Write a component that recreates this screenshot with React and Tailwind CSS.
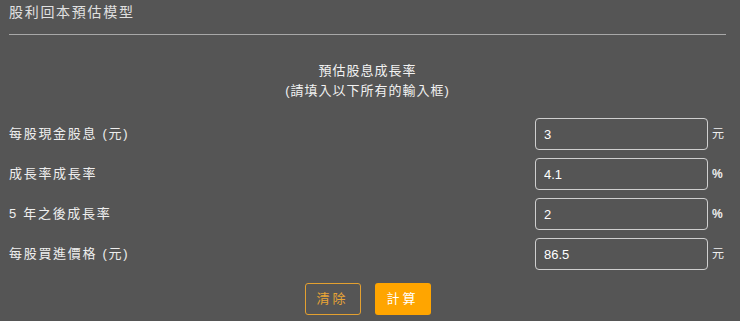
const rows = [
  { label: '每股現金股息 (元)', value: '3', unit: '元' },
  { label: '成長率成長率', value: '4.1', unit: '%' },
  { label: '5 年之後成長率', value: '2', unit: '%' },
  { label: '每股買進價格 (元)', value: '86.5', unit: '元' },
]

export default function App() {
  return (
    <div
      className="min-h-screen w-[740px] h-[321px] overflow-hidden bg-[#555555] pl-[9px] pr-[14px] text-[#e8e8e8]"
      style={{ fontFamily: '"Liberation Sans", "Noto Sans CJK TC", sans-serif' }}
    >
      <div className="pt-[3px] h-[34px] text-[14px] leading-[18px] tracking-[1.7px] text-[#e0e0e0]">股利回本預估模型</div>
      <div className="h-px bg-[#a8a8a8]" />

      <div className="pt-[26px] text-center text-[13px] leading-[20px] tracking-[1px] text-[#f2f2f2]">
        <div>預估股息成長率</div>
        <div>(請填入以下所有的輸入框)</div>
      </div>

      <div className="mt-[13px] flex flex-col">
        {rows.map((r) => (
          <div key={r.label} className="flex h-[40px] items-center">
            <div className="flex-1 text-[13px] tracking-[1.7px] text-[#eeeeee]">{r.label}</div>
            <input
              readOnly
              value={r.value}
              className="h-[32px] w-[173px] rounded-[4px] border border-[#cfcfcf] bg-transparent px-[8px] text-[13px] text-white outline-none"
            />
            <span className={'ml-[4px] w-[14px] text-[12px] text-[#eeeeee]' + (r.unit === '%' ? ' font-bold' : '')}>{r.unit}</span>
          </div>
        ))}
      </div>

      <div className="mt-[9px] flex justify-center gap-[14px]">
        <button className="h-[32px] w-[56px] rounded-[3px] border border-[#e3a030] text-[13px] tracking-[3px] text-[#e8a535]">清除</button>
        <button className="h-[32px] w-[56px] rounded-[3px] bg-[#ffa500] text-[13px] tracking-[3px] text-white">計算</button>
      </div>
    </div>
  )
}
